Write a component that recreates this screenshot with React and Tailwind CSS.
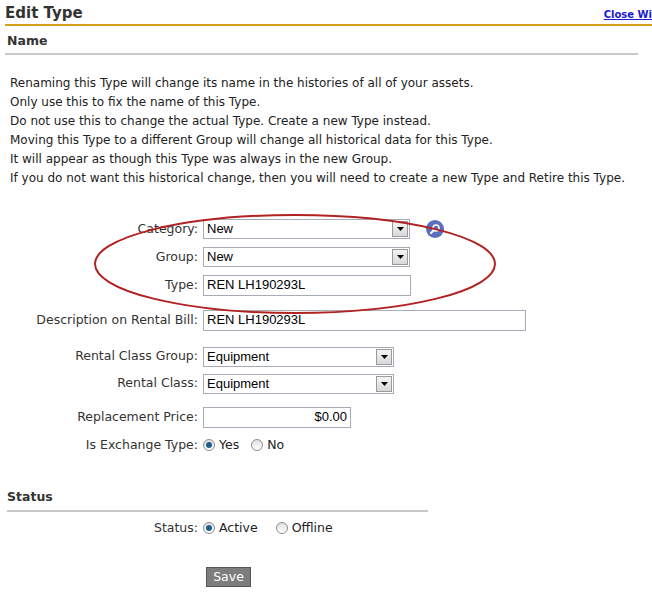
import React from "react";

const F = { fontFamily: "Tahoma, 'DejaVu Sans', sans-serif" };

function Select({ value, w }) {
  return (
    <div className={`flex h-[20px] items-center border border-[#a5acb5] bg-white ${w}`}>
      <span className="flex-1 pl-[3px] text-[13px] text-black" style={{ fontFamily: "'Liberation Sans', Arial, sans-serif" }}>{value}</span>
      <span className="m-[1px] flex h-[16px] w-[16px] items-center justify-center border border-[#9a9a9a] bg-gradient-to-b from-[#f4f4f4] to-[#d8d8d8]">
        <svg width="7" height="4" viewBox="0 0 7 4"><path d="M0 0h7L3.5 4z" fill="#000" /></svg>
      </span>
    </div>
  );
}
function Input({ value, w, right }) {
  return (
    <div className={`flex h-[21px] items-center border border-[#a5acb5] bg-white px-[3px] text-[13px] text-black ${w} ${right ? "justify-end" : ""}`} style={{ fontFamily: "'Liberation Sans', Arial, sans-serif" }}>{value}</div>
  );
}
function Radio({ on }) {
  return (
    <span className="inline-flex h-[12px] w-[12px] items-center justify-center rounded-full border border-[#8c8c8c] bg-gradient-to-b from-[#e0e0e0] to-white">
      {on && <span className="h-[6px] w-[6px] rounded-full bg-[#1d5f8a]" />}
    </span>
  );
}
function Row({ label, children, h, mt }) {
  return (
    <div className={`flex items-center ${h} ${mt}`}>
      <div className="w-[203px] pr-[5px] text-right text-[12.5px] text-[#333]">{label}</div>
      <div className="flex items-center">{children}</div>
    </div>
  );
}

export default function App() {
  return (
    <div className="relative h-[599px] w-[652px] overflow-hidden bg-white" style={F}>
      <div className="flex items-end justify-between pl-[5px] pt-[4px]">
        <div className="text-[15px] font-bold leading-[18px] text-[#333]">Edit Type</div>
        <a className="text-[10px] font-bold leading-[14px] text-[#1a1ad6] underline">Close Wi</a>
      </div>
      <div className="ml-[5px] mt-[2px] h-[2px] bg-[#d4a017]" />
      <div className="pl-[7px] pt-[7px] text-[12.5px] font-bold leading-[16px] text-[#333]">Name</div>
      <div className="ml-[5px] mr-[14px] mt-[4px] h-[2px] bg-[#c8c8c8]" />
      <div className="mt-[19px] pl-[10px] text-[12px] leading-[19px] text-[#222]">
        <div>Renaming this Type will change its name in the histories of all of your assets.</div>
        <div>Only use this to fix the name of this Type.</div>
        <div>Do not use this to change the actual Type. Create a new Type instead.</div>
        <div>Moving this Type to a different Group will change all historical data for this Type.</div>
        <div>It will appear as though this Type was always in the new Group.</div>
        <div>If you do not want this historical change, then you will need to create a new Type and Retire this Type.</div>
      </div>
      <div className="mt-[27px]">
        <Row label="Category:" h="h-[28px]">
          <Select value="New" w="w-[207px]" />
          <span className="ml-[16px] flex h-[18px] w-[18px] items-center justify-center rounded-full bg-[#5a6fc0]">
            <svg width="12" height="12" viewBox="0 0 12 12"><circle cx="7" cy="5" r="3" fill="none" stroke="#fff" strokeWidth="1.6" /><path d="M5 7L2 10" stroke="#fff" strokeWidth="2" strokeLinecap="round" /></svg>
          </span>
        </Row>
        <Row label="Group:" h="h-[28px]"><Select value="New" w="w-[207px]" /></Row>
        <Row label="Type:" h="h-[28px]"><Input value="REN LH190293L" w="w-[208px]" /></Row>
        <Row label="Description on Rental Bill:" h="h-[28px]" mt="mt-[7px]"><Input value="REN LH190293L" w="w-[323px]" /></Row>
        <Row label="Rental Class Group:" h="h-[27px]" mt="mt-[9px]"><Select value="Equipment" w="w-[191px]" /></Row>
        <Row label="Rental Class:" h="h-[27px]"><Select value="Equipment" w="w-[191px]" /></Row>
        <Row label="Replacement Price:" h="h-[28px]" mt="mt-[6px]"><Input value="$0.00" w="w-[148px]" right /></Row>
        <Row label="Is Exchange Type:" h="h-[28px]">
          <span className="flex items-center gap-[4px] text-[12.5px] text-[#222]"><Radio on /> Yes</span>
          <span className="ml-[12px] flex items-center gap-[4px] text-[12.5px] text-[#222]"><Radio /> No</span>
        </Row>
      </div>
      <div className="mt-[30px] pl-[7px] text-[12.5px] font-bold leading-[16px] text-[#333]">Status</div>
      <div className="ml-[7px] mt-[5px] h-[2px] w-[421px] bg-[#c8c8c8]" />
      <Row label="Status:" h="h-[28px]" mt="mt-[2px]">
        <span className="flex items-center gap-[4px] text-[12.5px] text-[#222]"><Radio on /> Active</span>
        <span className="ml-[18px] flex items-center gap-[4px] text-[12.5px] text-[#222]"><Radio /> Offline</span>
      </Row>
      <div className="mt-[22px] pl-[206px]">
        <button className="h-[20px] w-[45px] border border-[#555] bg-[#7d7d7d] text-[12.5px] leading-[18px] text-white">Save</button>
      </div>
      <svg className="pointer-events-none absolute left-[90px] top-[208px]" width="415" height="110" viewBox="0 0 415 110">
        <ellipse cx="205" cy="56" rx="200" ry="49" fill="none" stroke="#b22222" strokeWidth="2" />
      </svg>
    </div>
  );
}
